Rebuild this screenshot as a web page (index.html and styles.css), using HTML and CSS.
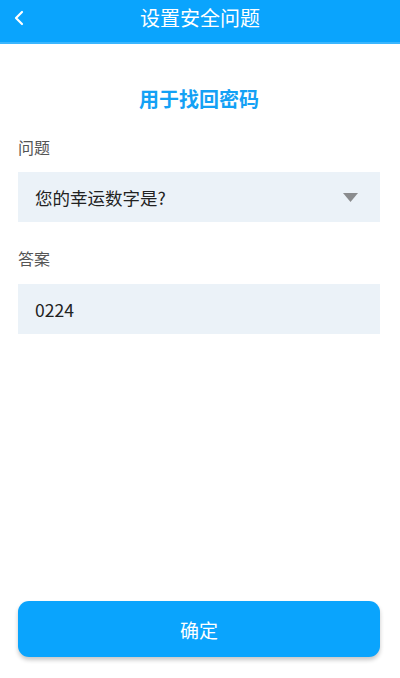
FILE: index.html
```html
<!DOCTYPE html>
<html lang="zh-CN">
<head>
<meta charset="utf-8">
<link rel="stylesheet" href="styles.css">
</head>
<body>
<div class="page">
  <header class="topbar">
    <span class="back">
      <svg width="12" height="16" viewBox="0 0 12 16"><path d="M9 2 L3 8 L9 14" fill="none" stroke="#fff" stroke-width="2.2" stroke-linecap="round" stroke-linejoin="round"/></svg>
    </span>
    <h1 class="title">设置安全问题</h1>
  </header>
  <main class="content">
    <h2 class="subtitle">用于找回密码</h2>
    <div class="field">
      <div class="label">问题</div>
      <div class="box select">
        <span>您的幸运数字是?</span>
        <svg class="caret" width="15" height="9" viewBox="0 0 15 9"><path d="M0 0 H15 L7.5 9 Z" fill="#8a8c8e"/></svg>
      </div>
    </div>
    <div class="field">
      <div class="label">答案</div>
      <div class="box">0224</div>
    </div>
  </main>
  <footer class="footer">
    <button class="confirm">确定</button>
  </footer>
</div>
</body>
</html>
```

FILE: styles.css
```css
* { box-sizing: border-box; }
html, body { margin: 0; padding: 0; }
body {
  width: 400px;
  height: 678px;
  background: #fff;
  font-family: "Noto Sans CJK SC", "Noto Sans", sans-serif;
  color: #333;
}
.page {
  height: 678px;
  display: flex;
  flex-direction: column;
}
.topbar {
  height: 44px;
  background: #0aa4fd;
  border-bottom: 2px solid #3bb6fe;
  display: flex;
  align-items: center;
  justify-content: center;
  position: relative;
}
.back {
  position: absolute;
  left: 13px;
  top: 10px;
  display: flex;
}
.title {
  margin: 0;
  color: #fff;
  font-size: 20px;
  font-weight: 400;
  line-height: 1;
  margin-top: -6px;
}
.content {
  flex: 1;
  padding: 0 20px 0 18px;
}
.subtitle {
  margin: 43px 0 0;
  text-align: center;
  color: #13a1f5;
  font-size: 20px;
  font-weight: 700;
  line-height: 24px;
}
.field { display: flex; flex-direction: column; }
.label {
  font-size: 16px;
  color: #555;
  line-height: 20px;
  margin-top: 26px;
  margin-bottom: 15px;
}
.field + .field .label { margin-top: 26px; margin-bottom: 16px; }
.box {
  height: 50px;
  background: #ebf2f8;
  display: flex;
  align-items: center;
  padding-left: 17px;
  font-size: 17.5px;
  color: #222;
}
.select { justify-content: space-between; padding-right: 22px; }
.footer {
  padding: 0 20px 21px 18px;
}
.confirm {
  width: 100%;
  height: 56px;
  border: none;
  border-radius: 11px;
  background: #0aa4fd;
  color: #fff;
  font-family: "Noto Sans CJK SC", "Noto Sans", sans-serif;
  font-size: 19px;
  box-shadow: 0 3px 4px rgba(0,0,0,0.22);
}
```
